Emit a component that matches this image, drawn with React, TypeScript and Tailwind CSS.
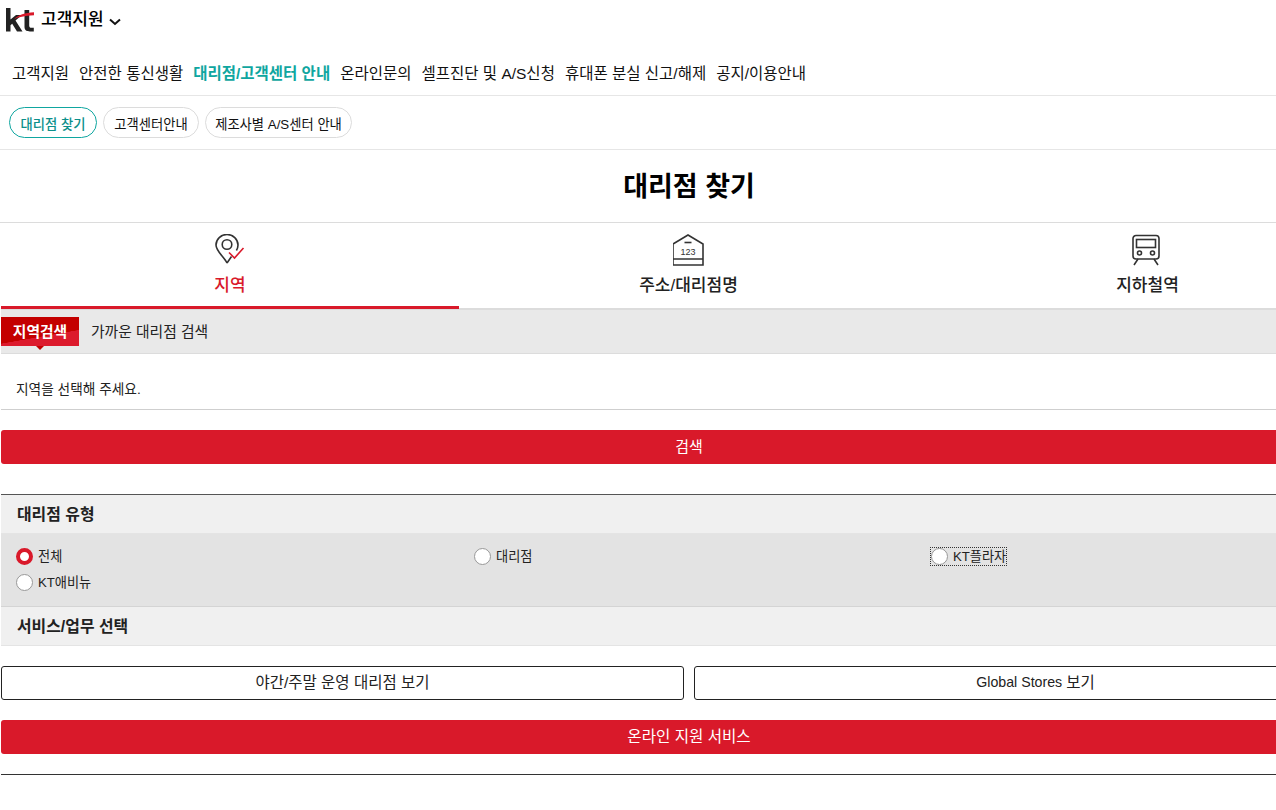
import React from "react";

const font = { fontFamily: '"Liberation Sans", "Noto Sans CJK KR", sans-serif' };

function Radio({ label, checked, focus }: { label: string; checked?: boolean; focus?: boolean }) {
  return (
    <div className="flex h-[26px] items-center">
      <div className={`flex items-center gap-[5px] ${focus ? "outline outline-1 outline-dotted outline-[#333]" : ""}`}>
        {checked ? (
          <span className="box-border h-[17px] w-[17px] rounded-full border-[4px] border-[#d9192a] bg-white" />
        ) : (
          <span className="box-border h-[17px] w-[17px] rounded-full border border-[#999] bg-white" />
        )}
        <span className="text-[13.2px] leading-[17px] text-[#222]">{label}</span>
      </div>
    </div>
  );
}

function PinIcon() {
  return (
    <svg width="32" height="32" viewBox="1 0 32 32" fill="none">
      <path d="M14 29 C11 23 3 17 3 11 a11 10.5 0 0 1 22 0 c0 2-.6 3.8-1.6 5.5 M14 29 l4.5-6.5" stroke="#333" strokeWidth="1.6" />
      <circle cx="14" cy="10.5" r="4.8" stroke="#333" strokeWidth="1.6" />
      <path d="M16 18.5 l5.5 5.5 L30.5 14" stroke="#d9192a" strokeWidth="1.6" />
    </svg>
  );
}

function HouseIcon() {
  return (
    <svg width="32" height="32" viewBox="1 0 32 32" fill="none">
      <path d="M1 10 L16 1 L31 10 V31 H1 Z M1 25 H31" stroke="#333" strokeWidth="1.6" />
      <path d="M12.5 8.5 H19.5" stroke="#333" strokeWidth="1.6" />
      <text x="16" y="20.5" textAnchor="middle" fontSize="9" fill="#333" fontFamily="Liberation Sans">123</text>
    </svg>
  );
}

function TrainIcon() {
  return (
    <svg width="32" height="32" viewBox="2 0 32 32" fill="none">
      <path d="M6 1.5 H26 a3 3 0 0 1 3 3 V22 a3 3 0 0 1-3 3 H6 a3 3 0 0 1-3-3 V4.5 a3 3 0 0 1 3-3 Z" stroke="#333" strokeWidth="1.6" />
      <rect x="6.5" y="5.5" width="19" height="8" stroke="#333" strokeWidth="1.6" />
      <circle cx="9.5" cy="19" r="2" stroke="#333" strokeWidth="1.6" />
      <circle cx="22.5" cy="19" r="2" stroke="#333" strokeWidth="1.6" />
      <path d="M8 25 L4 31 M24 25 L28 31" stroke="#333" strokeWidth="1.6" />
    </svg>
  );
}

export default function App() {
  return (
    <div className="h-[810px] w-[1276px] overflow-hidden bg-white" style={font}>
      <div className="w-[1377px]">
        <header className="flex h-[40px] items-center pl-[6px]">
          <svg width="28" height="24" viewBox="0 0 28 24" className="mr-[7px]">
            <path d="M0 0 H4.5 V11.5 L10 7 H16 L9.5 12.5 L16.5 23.5 H11 L6.2 15.8 L4.5 17.2 V23.5 H0 Z" fill="#222" />
            <path d="M18.5 2 H23.2 V17.5 C23.2 19.3 24 19.8 25.3 19.8 H27.8 V23.5 H24 C20 23.5 18.5 21.8 18.5 18.8 Z" fill="#222" />
            <path d="M8 11.5 C12 8.8 19 8 29 7.2 V4.2 C20 4.6 12 6.5 8 11.5 Z" fill="#d9192a" />
          </svg>
          <span className="text-[17px] font-medium leading-[20px] text-black">고객지원</span>
          <svg width="12" height="8" viewBox="0 0 12 8" className="ml-[5px] mt-[3px]" fill="none">
            <path d="M1 1.5 L6 6 L11 1.5" stroke="#111" strokeWidth="2" />
          </svg>
        </header>

        <nav className="flex h-[56px] items-center gap-[10px] border-b border-[#e6e6e6] pl-[12px] pt-[12px] text-[15.5px] text-[#111]">
          <span>고객지원</span>
          <span>안전한 통신생활</span>
          <span className="text-[#0fa6a0] font-bold">대리점/고객센터 안내</span>
          <span>온라인문의</span>
          <span>셀프진단 및 A/S신청</span>
          <span>휴대폰 분실 신고/해제</span>
          <span>공지/이용안내</span>
        </nav>

        <div className="flex h-[54px] items-center gap-[6px] border-b border-[#e6e6e6] pb-[1px] pl-[9px] text-[13.3px] text-[#111]">
          <span className="flex h-[31px] w-[88px] items-center justify-center rounded-full border border-[#0fa6a0] pt-[5px] font-medium text-[#0c8f8a]">대리점 찾기</span>
          <span className="flex h-[31px] w-[96px] items-center justify-center rounded-full border border-[#dcdcdc] pt-[5px]">고객센터안내</span>
          <span className="flex h-[31px] w-[147px] items-center justify-center rounded-full border border-[#dcdcdc] pt-[5px]">제조사별 A/S센터 안내</span>
        </div>

        <div className="flex h-[73px] items-center justify-center border-b border-[#dcdcdc] pl-[1px] pt-[2px]">
          <h1 className="text-[27px] font-bold leading-[30px] text-black">대리점 찾기</h1>
        </div>

        <div className="ml-[1px] flex h-[87px] border-b-2 border-[#dcdcdc]">
          <div className="relative flex w-[458px] flex-col items-center pt-[11px]">
            <PinIcon />
            <span className="mt-[8px] text-[17px] font-medium leading-[24px] text-[#d9192a]">지역</span>
            <span className="absolute -bottom-[1px] left-0 h-[3px] w-full bg-[#d9192a]" />
          </div>
          <div className="flex w-[459px] flex-col items-center pt-[11px]">
            <HouseIcon />
            <span className="mt-[8px] text-[17px] font-medium leading-[24px] text-[#222]">주소/대리점명</span>
          </div>
          <div className="flex w-[459px] flex-col items-center pt-[11px]">
            <TrainIcon />
            <span className="mt-[8px] text-[17px] font-medium leading-[24px] text-[#222]">지하철역</span>
          </div>
        </div>

        <div className="ml-[1px] flex h-[44px] items-start gap-[12px] border-b border-[#dcdcdc] bg-[#e9e9e9] pt-[7px]">
          <div className="relative flex h-[29px] w-[78px] items-center justify-center bg-[linear-gradient(170deg,#c40000_0%,#c40000_62%,#dc1a2c_63%,#dc1a2c_100%)] pt-[2px] text-[14.8px] font-bold text-white">
            지역검색
            <span className="absolute -bottom-[4px] left-[35px] h-0 w-0 border-x-[4px] border-t-[4px] border-x-transparent border-t-[#c40000]" />
          </div>
          <span className="pt-[1px] text-[14.8px] leading-[29px] text-[#222]">가까운 대리점 검색</span>
        </div>

        <div className="ml-[1px] flex h-[56px] items-center border-b border-[#cfcfcf] pl-[15px] pt-[18px] text-[13.7px] text-[#222]">
          지역을 선택해 주세요.
        </div>

        <div className="ml-[1px] mt-[20px] flex h-[34px] items-center justify-center rounded-[3px] bg-[#d9192a] text-[15px] text-white">검색</div>

        <section className="ml-[1px] mt-[30px] border-t border-[#555]">
          <div className="flex h-[39px] items-center border-b border-[#e4e4e4] bg-[#f0f0f0] pl-[16px] pt-[1px] text-[15.9px] font-bold text-[#222]">대리점 유형</div>
          <div className="h-[73px] border-b border-[#d4d4d4] bg-[#e3e3e3] pl-[15px] pt-[9px]">
            <div className="grid grid-cols-[458px_457px_1fr]">
              <Radio label="전체" checked />
              <Radio label="대리점" />
              <Radio label="KT플라자" focus />
              <Radio label="KT애비뉴" />
            </div>
          </div>
          <div className="flex h-[39px] items-center border-b border-[#e4e4e4] bg-[#f0f0f0] pl-[16px] pt-[1px] text-[15.9px] font-bold text-[#222]">서비스/업무 선택</div>
        </section>

        <div className="ml-[1px] mt-[20px] flex gap-[10px]">
          <div className="flex h-[34px] flex-1 items-center justify-center rounded-[3px] border border-[#222] text-[15.5px] text-[#222]">야간/주말 운영 대리점 보기</div>
          <div className="flex h-[34px] flex-1 items-center justify-center gap-[4px] rounded-[3px] border border-[#222] text-[15.5px] text-[#222]"><span className="text-[14.2px]">Global Stores</span><span>보기</span></div>
        </div>

        <div className="ml-[1px] mt-[20px] flex h-[34px] items-center justify-center rounded-[3px] bg-[#d9192a] text-[15.6px] text-white">온라인 지원 서비스</div>

        <div className="ml-[1px] mt-[20px] border-t border-[#333]" />
      </div>
    </div>
  );
}
